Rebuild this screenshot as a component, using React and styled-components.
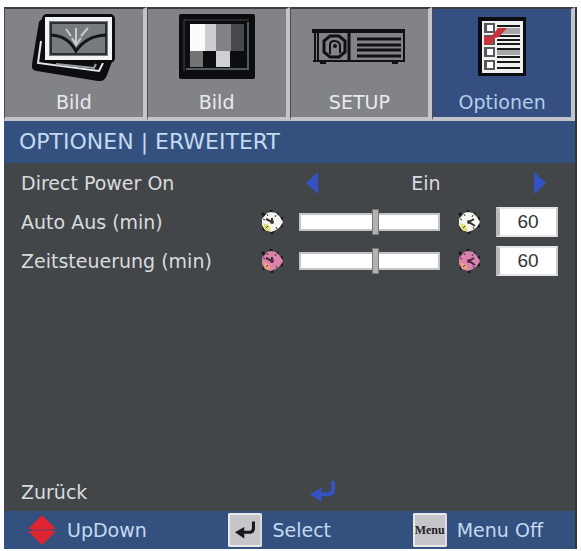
import React, { useState } from "react";
import styled, { createGlobalStyle } from "styled-components";

const GlobalStyle = createGlobalStyle`
  * {
    box-sizing: border-box;
  }
  body {
    background: #fdfdfe;
    margin: 0;
  }
  button, input {
    font: inherit;
    color: inherit;
  }
`;

const Page = styled.div`
  display: flex;
  font-family: "DejaVu Sans", Verdana, sans-serif;
  font-size: 19px;
  line-height: 24px;
  min-height: 100vh;
  padding: 7px 4px 2px;
`;

const Panel = styled.main`
  background: #434649;
  border-right: 2px solid #33363b;
  color: #d9dcdf;
  display: flex;
  flex: 1;
  flex-direction: column;
  min-width: 0;
`;

const TabBar = styled.nav`
  display: grid;
  grid-template-columns: repeat(4, 1fr);
`;

const TabButton = styled.button`
  align-items: center;
  background: ${(props) => (props.$active ? "#344f80" : "#818387")};
  border: solid;
  border-color: #3b3c42 #c3c5ca #c3c5ca #4b4c51;
  border-width: 2px 4px 4px 1px;
  color: ${(props) => (props.$active ? "#b3cdea" : "#e9eaed")};
  display: flex;
  flex-direction: column;
  gap: 8px;
  padding: 3px 0;
`;

const TabIcon = styled.span`
  align-items: center;
  display: flex;
  height: 70px;
`;

const Title = styled.h1`
  background: #34507f;
  color: #c3daf1;
  font-size: 22px;
  font-weight: normal;
  line-height: 42px;
  margin: 0;
  padding: 0 15px;
`;

const Settings = styled.div`
  display: flex;
  flex: 1;
  flex-direction: column;
  padding: 0 17px;
`;

const Row = styled.div`
  align-items: center;
  display: grid;
  gap: 14px;
  grid-template-columns: 222px 28px minmax(0, 1fr) 28px 62px;
  height: 39px;

  &:last-child {
    margin-top: auto;
  }
  svg {
    display: block;
    justify-self: center;
  }
`;

const Choice = styled.div`
  align-items: center;
  display: flex;
  grid-column: 3 / -1;
  justify-content: space-between;
  padding: 0 12px 0 7px;
`;

const PlainButton = styled.button`
  background: none;
  border: 0;
  display: flex;
  padding: 0;
`;

const BackButton = styled(PlainButton)`
  grid-column: 3;
  padding-left: 11px;
`;

const Slider = styled.input`
  appearance: none;
  background: transparent;
  height: 26px;
  margin: 0;
  width: 100%;

  &::-webkit-slider-runnable-track {
    background: #fff;
    border: 2px solid #c4c4c6;
    height: 18px;
  }
  &::-webkit-slider-thumb {
    appearance: none;
    background: #b2b2b2;
    border: 1px solid #77787a;
    height: 26px;
    margin-top: -6px;
    width: 7px;
  }
`;

const ValueBox = styled.input`
  background: #fff;
  border: solid;
  border-color: #e4e4e6 #c9c9cc #e4e4e6 #b9b9bc;
  border-width: 2px 2px 2px 4px;
  color: #333;
  font-family: "Liberation Sans", Arial, sans-serif;
  height: 30px;
  padding: 0;
  text-align: center;
  width: 100%;
`;

const Footer = styled.footer`
  align-items: center;
  background: #34507f;
  color: #c3daf1;
  display: flex;
  height: 38px;
  justify-content: space-between;
  padding: 0 32px 0 24px;
`;

const Hint = styled.div`
  align-items: center;
  display: flex;
  gap: 10px;
`;

const KeyCap = styled.span`
  align-items: center;
  background: #c6c6ca;
  border: 2px solid;
  border-color: #e9e9ec #dcdce0 #e9e9ec #e9e9ec;
  border-radius: 2px;
  color: #222;
  display: flex;
  font: bold 12px "Liberation Serif", serif;
  height: 34px;
  justify-content: center;
  width: 34px;
`;

const PictureIcon = () => (
  <svg width="84" height="68" viewBox="0 0 84 68" aria-hidden="true">
    <path d="M8 9 L1 51 Q0 57 5 57 L66 67 Q72 68 74 62 L80 46 L14 4Z" fill="#0c0d0f" stroke="#0c0d0f" strokeWidth="2" />
    <path d="M9 28 L6 50 L67 58 L71 50" fill="none" stroke="#e4e6e9" strokeWidth="2" />
    <path d="M24 51 L62 55 L64 51" fill="none" stroke="#9b9ea2" strokeWidth="2" />
    <rect x="10" y="1" width="73" height="49" rx="5" fill="#0c0d0f" />
    <rect x="15" y="6" width="63" height="39" fill="#777a7e" stroke="#f3f4f5" strokeWidth="4" />
    <rect x="19" y="10" width="55" height="31" fill="none" stroke="#2c2e31" strokeWidth="2" />
    <path d="M19 22 Q36 23 44 38 Q54 23 74 22" fill="none" stroke="#141517" strokeWidth="3" />
    <path d="M34 16 L39 23 M44 15 V30 M56 15 L49 23 M40 25 L44 32 L49 25" fill="none" stroke="#c9cbce" strokeWidth="2" />
  </svg>
);

const TestPatternIcon = () => (
  <svg width="76" height="66" viewBox="0 0 76 66" aria-hidden="true">
    <rect width="76" height="65" rx="2" fill="#0c0d0f" />
    <path d="M5 57 V6 H70" fill="none" stroke="#46484c" />
    <path d="M7 55 H69 V8" fill="none" stroke="#55585c" strokeWidth="2" />
    <rect x="11" y="10" width="15" height="27" fill="#fbfbfb" />
    <rect x="26" y="10" width="11" height="27" fill="#cccdd0" />
    <rect x="37" y="10" width="15" height="27" fill="#818387" />
    <rect x="52" y="10" width="13" height="27" fill="#46484b" />
    <rect x="11" y="37" width="13" height="16" fill="#727574" />
    <rect x="37" y="37" width="14" height="16" fill="#cfd0d3" />
  </svg>
);

const ProjectorIcon = () => (
  <svg width="94" height="38" viewBox="0 0 94 38" aria-hidden="true">
    <g fill="none" stroke="#101113">
      <path d="M0 3 H93" strokeWidth="4" />
      <path d="M3 4 V33 M6 4 V33" strokeWidth="2" />
      <path d="M37 4 V33" strokeWidth="3" />
      <path d="M92 4 V33" strokeWidth="2" />
      <path d="M1 33 H93" strokeWidth="2" />
      <path d="M18 8 H27 L33 13 V24 L27 29 H18 L12 24 V13Z" strokeWidth="3" />
      <path d="M18 26 V17 Q18 13 22 13 Q28 13 28 18 V25" strokeWidth="2" />
      <path d="M45 11 H89 M45 17 H89 M45 22 H89 M45 28 H89" strokeWidth="3" />
    </g>
    <circle cx="23" cy="18" r="2" fill="#101113" />
    <path d="M8 33 H14 V36 H8Z M80 33 H86 V36 H80Z" fill="#101113" />
  </svg>
);

const ChecklistIcon = () => (
  <svg width="49" height="60" viewBox="0 0 49 60" aria-hidden="true">
    <rect width="48" height="59" fill="#0b0d12" />
    <rect x="4" y="4" width="41" height="52" fill="#f0f0ee" />
    {[6, 18, 30, 43].map((y) => (
      <g key={y}>
        <rect x="6" y={y} width="11" height="10" fill="#55575a" />
        <rect x="9" y={y + 2} width="6" height="6" fill="#fff" />
      </g>
    ))}
    <path d="M19 11 H42 V17 H19Z M19 32 H42 V38 H19Z" fill="#a5a7a9" />
    <path
      d="M19 9 H42 M19 19 H42 M19 23 H42 M19 27 H42 M19 32 H42 M19 40 H42 M19 45 H42 M19 51 H42"
      fill="none"
      stroke="#17181a"
      strokeWidth="2"
    />
    <path d="M6 19 L13 20 L20 11 H29 L21 20 L17 21 L14 27 L6 28 Z" fill="#c93238" />
  </svg>
);

const ClockIcon = ({ face, tint, late }) => (
  <svg width="24" height="24" viewBox="0 0 24 24" aria-hidden="true">
    <path d="M3 3 L6 6 M12 0 V4 M19 3 L17 6 M24 8 L21 9 M24 16 L20 16 M13 24 V20 M4 20 L7 18" stroke="#1c1c1e" strokeWidth="3" />
    <path d="M8 3 L12 2 L17 3 L21 7 L24 12 L21 17 L17 20 L12 22 L6 20 L3 15 L3 9 Z" fill={face} />
    <path d="M4 13 L10 15 L12 21 L6 20Z" fill={tint} />
    <path d="M4 9 L6 10 M8 4 L9 6 M17 5 L16 7 M7 18 L9 16 M18 19 L17 17" stroke="#3a3838" />
    <path
      d={late ? "M18 9 L13 12 L19 16" : "M7 9 L13 12 L13 8"}
      fill="none"
      stroke="#332c32"
      strokeWidth="2"
    />
    <circle cx="13" cy="12" r="2" fill={face === "#f6f6f0" ? "#3c3c3c" : "#6b1f46"} />
  </svg>
);

const Triangle = ({ right }) => (
  <svg width="13" height="22" viewBox="0 0 13 22" aria-hidden="true">
    <path d={right ? "M1 0 L13 11 L1 22Z" : "M12 0 L0 11 L12 22Z"} fill="#3452c4" />
  </svg>
);

const EnterIcon = ({ color, size }) => (
  <svg width={size} height={size} viewBox="0 0 26 26" aria-hidden="true">
    <path d="M22 2 H26 V12 Q25 18 19 18 H12 V24 L0 16 L12 9 V14 H18 Q22 14 22 10Z" fill={color} />
  </svg>
);

const UpDownIcon = () => (
  <svg width="29" height="30" viewBox="0 0 29 30" aria-hidden="true">
    <path d="M14 0 L28 14 H0Z M0 16 H28 L14 30Z" fill="#de2530" />
    <path d="M4 15 H24" stroke="#a3304e" strokeWidth="2" />
  </svg>
);

const tabs = [
  { id: "image", label: "Bild", Icon: PictureIcon },
  { id: "display", label: "Bild", Icon: TestPatternIcon },
  { id: "setup", label: "SETUP", Icon: ProjectorIcon },
  { id: "options", label: "Optionen", Icon: ChecklistIcon },
];

const timers = [
  { id: "auto-off", label: "Auto Aus (min)", face: "#f6f6f0", tint: "#e3e070" },
  { id: "sleep", label: "Zeitsteuerung (min)", face: "#dc82ae", tint: "#e8a27c" },
];

const TimerRow = ({ id, label, face, tint }) => {
  const [minutes, setMinutes] = useState(60);

  return (
    <Row>
      <label htmlFor={id}>{label}</label>
      <ClockIcon face={face} tint={tint} />
      <Slider
        id={id}
        type="range"
        min="0"
        max="110"
        value={minutes}
        onChange={(e) => setMinutes(Number(e.target.value))}
      />
      <ClockIcon face={face} tint={tint} late />
      <ValueBox type="text" aria-label={label} value={minutes} readOnly />
    </Row>
  );
};

const App = () => {
  const [activeTab, setActiveTab] = useState("options");
  const [directPower, setDirectPower] = useState(true);
  const togglePower = () => setDirectPower(!directPower);

  return (
    <Page>
      <GlobalStyle />
      <Panel>
        <TabBar>
          {tabs.map(({ id, label, Icon }) => (
            <TabButton key={id} type="button" $active={id === activeTab} onClick={() => setActiveTab(id)}>
              <TabIcon>
                <Icon />
              </TabIcon>
              {label}
            </TabButton>
          ))}
        </TabBar>

        <Title>OPTIONEN | ERWEITERT</Title>

        <Settings>
          <Row>
            <span>Direct Power On</span>
            <Choice>
              <PlainButton type="button" aria-label="Zurück" onClick={togglePower}>
                <Triangle />
              </PlainButton>
              <span>{directPower ? "Ein" : "Aus"}</span>
              <PlainButton type="button" aria-label="Weiter" onClick={togglePower}>
                <Triangle right />
              </PlainButton>
            </Choice>
          </Row>
          {timers.map((timer) => (
            <TimerRow key={timer.id} {...timer} />
          ))}
          <Row>
            <span>Zurück</span>
            <BackButton type="button" aria-label="Zurück">
              <EnterIcon color="#3452c4" size={25} />
            </BackButton>
          </Row>
        </Settings>

        <Footer>
          <Hint>
            <UpDownIcon />
            UpDown
          </Hint>
          <Hint>
            <KeyCap>
              <EnterIcon color="#1a1a1c" size={20} />
            </KeyCap>
            Select
          </Hint>
          <Hint>
            <KeyCap>Menu</KeyCap>
            Menu Off
          </Hint>
        </Footer>
      </Panel>
    </Page>
  );
};

export default App;
